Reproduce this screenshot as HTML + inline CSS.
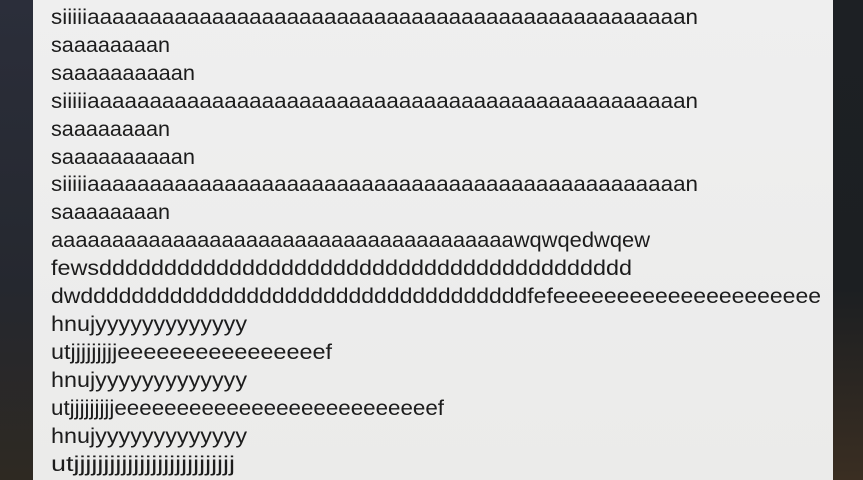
<!DOCTYPE html>
<html><head><meta charset="utf-8"><style>
html,body{margin:0;padding:0;width:863px;height:480px;overflow:hidden}
body{background:linear-gradient(180deg,#2b2e3a 0%,#25282f 60%,#2e2922 100%);position:relative;font-family:"Liberation Sans",sans-serif}
.panel{position:absolute;left:33px;top:0;width:800px;height:480px;background:linear-gradient(180deg,#efefef,#ebebea)}
.l{position:absolute;left:51px;height:28px;line-height:28px;font-size:21px;color:#1c1c1c;white-space:nowrap;transform-origin:0 50%}
.r{position:absolute;right:0;top:0;width:30px;height:480px;background:linear-gradient(180deg,#1d2024,#1c1f22 60%,#3a2e22)}
</style></head><body>
<div class="r"></div>
<div class="panel"></div>
<div class="l" data-w="647" style="top:4px">siiiiiaaaaaaaaaaaaaaaaaaaaaaaaaaaaaaaaaaaaaaaaaaaaaaaan</div>
<div class="l" data-w="119" style="top:32px">saaaaaaaan</div>
<div class="l" data-w="144" style="top:60px">saaaaaaaaaan</div>
<div class="l" data-w="647" style="top:88px">siiiiiaaaaaaaaaaaaaaaaaaaaaaaaaaaaaaaaaaaaaaaaaaaaaaaan</div>
<div class="l" data-w="119" style="top:116px">saaaaaaaan</div>
<div class="l" data-w="144" style="top:144px">saaaaaaaaaan</div>
<div class="l" data-w="647" style="top:171px">siiiiiaaaaaaaaaaaaaaaaaaaaaaaaaaaaaaaaaaaaaaaaaaaaaaaan</div>
<div class="l" data-w="119" style="top:199px">saaaaaaaan</div>
<div class="l" data-w="599" style="top:227px">aaaaaaaaaaaaaaaaaaaaaaaaaaaaaaaaaaaaaawqwqedwqew</div>
<div class="l" data-w="581" style="top:255px">fewsddddddddddddddddddddddddddddddddddddddddd</div>
<div class="l" data-w="770" style="top:283px">dwdddddddddddddddddddddddddddddddddddfefeeeeeeeeeeeeeeeeeeeee</div>
<div class="l" data-w="196" style="top:311px">hnujyyyyyyyyyyyyy</div>
<div class="l" data-w="281" style="top:339px">utjjjjjjjjjeeeeeeeeeeeeeeeef</div>
<div class="l" data-w="196" style="top:367px">hnujyyyyyyyyyyyyy</div>
<div class="l" data-w="393" style="top:395px">utjjjjjjjjjeeeeeeeeeeeeeeeeeeeeeeeeeef</div>
<div class="l" data-w="196" style="top:423px">hnujyyyyyyyyyyyyy</div>
<div class="l" data-w="184" style="top:451px">utjjjjjjjjjjjjjjjjjjjjjjjjjjj</div>
<script>
document.querySelectorAll('.l').forEach(function(e){var w=e.getBoundingClientRect().width;var t=+e.dataset.w;if(w>0)e.style.transform='scaleX('+(t/w)+')';});
</script>
</body></html>
